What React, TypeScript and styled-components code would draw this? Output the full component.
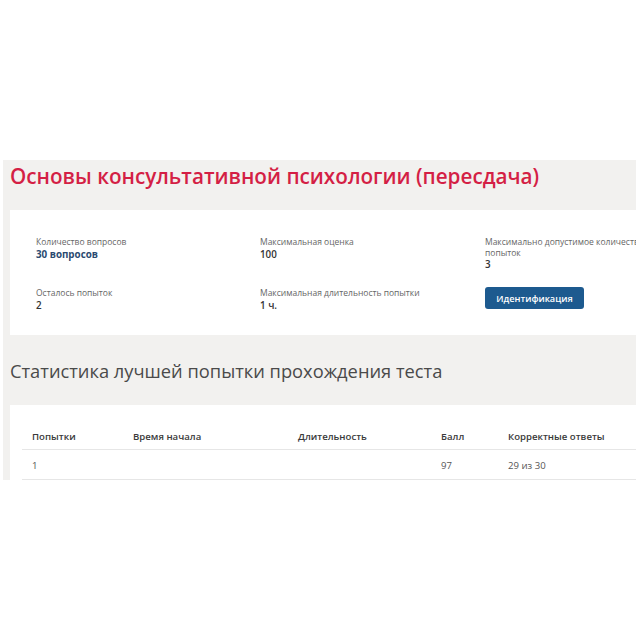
import React from 'react';
import styled, { createGlobalStyle } from 'styled-components';

const RED = '#d41f45';
const FRAME_GREY = '#f2f1ef';
const BLUE_BTN = '#1d5a8f';
const LABEL = '#666';

const GlobalStyle = createGlobalStyle`
  html, body {
    margin: 0;
    padding: 0;
    background: #fff;
    font-family: "Open Sans", "Liberation Sans", sans-serif;
  }
`;

const Frame = styled.div`
  margin: 160px 4px 0 3px;
  height: 320px;
  background: ${FRAME_GREY};
  overflow: hidden;
  padding-left: 7px;
`;

const Title = styled.h1`
  margin: 0;
  height: 50px;
  padding-top: 1px;
  box-sizing: border-box;
  font-size: 20.7px;
  font-weight: 600;
  color: ${RED};
  line-height: 30px;
  white-space: nowrap;
`;

const Card = styled.div`
  background: #fff;
  width: 700px;
  box-sizing: border-box;
`;

const InfoCard = styled(Card)`
  height: 125px;
  padding: 27px 0 0 26px;
  display: grid;
  grid-template-columns: 224px 225px 165px;
  grid-template-rows: 51px auto;
`;

const Field = styled.div`
  display: flex;
  flex-direction: column;
  align-items: flex-start;
`;

const Label = styled.span`
  font-size: 8.5px;
  line-height: 10.5px;
  color: ${LABEL};
`;

const Value = styled.span<{ $accent?: boolean }>`
  font-size: 9.8px;
  line-height: 13px;
  font-weight: ${p => (p.$accent ? 700 : 600)};
  color: ${p => (p.$accent ? '#2b4a70' : '#333')};
`;

const Button = styled.button`
  width: 99px;
  height: 22px;
  margin-top: -1px;
  border: none;
  border-radius: 3px;
  background: ${BLUE_BTN};
  color: #fff;
  font-family: inherit;
  font-size: 9.2px;
  font-weight: 600;
  padding: 0;
  cursor: pointer;
`;

const Subtitle = styled.h2`
  margin: 0;
  height: 70px;
  padding-top: 21px;
  box-sizing: border-box;
  font-size: 18.3px;
  font-weight: 400;
  line-height: 30px;
  color: #4a4a4a;
  white-space: nowrap;
`;

const TableCard = styled(Card)`
  padding: 20px 0 0 12px;
`;

const Table = styled.table`
  width: 614px;
  table-layout: fixed;
  border-collapse: collapse;
  font-size: 9.6px;
  color: #444;
`;

const Head = styled.th<{ $w: number }>`
  width: ${p => p.$w}px;
  box-sizing: border-box;
  text-align: left;
  font-weight: 600;
  color: #3a3a3a;
  padding: 0 0 0 10px;
  height: 24px;
  border-bottom: 1px solid #e6e6e6;
`;

const Cell = styled.td`
  padding: 2px 0 0 10px;
  height: 27px;
  color: #555;
  border-bottom: 1px solid #e6e6e6;
`;

const info = [
  { label: 'Количество вопросов', value: '30 вопросов', accent: true },
  { label: 'Максимальная оценка', value: '100' },
  { label: 'Максимально допустимое количество попыток', value: '3' },
  { label: 'Осталось попыток', value: '2' },
  { label: 'Максимальная длительность попытки', value: '1 ч.' },
];

const columns = [
  { title: 'Попытки', w: 101 },
  { title: 'Время начала', w: 165 },
  { title: 'Длительность', w: 143 },
  { title: 'Балл', w: 67 },
  { title: 'Корректные ответы', w: 138 },
];

const App = (): JSX.Element => (
  <>
    <GlobalStyle />
    <Frame>
      <Title>Основы консультативной психологии (пересдача)</Title>
      <InfoCard>
        {info.map(f => (
          <Field key={f.label}>
            <Label>{f.label}</Label>
            <Value $accent={f.accent}>{f.value}</Value>
          </Field>
        ))}
        <Field>
          <Button>Идентификация</Button>
        </Field>
      </InfoCard>
      <Subtitle>Статистика лучшей попытки прохождения теста</Subtitle>
      <TableCard>
        <Table>
          <thead>
            <tr>
              {columns.map(c => (
                <Head key={c.title} $w={c.w}>{c.title}</Head>
              ))}
            </tr>
          </thead>
          <tbody>
            <tr>
              <Cell>1</Cell>
              <Cell></Cell>
              <Cell></Cell>
              <Cell>97</Cell>
              <Cell>29 из 30</Cell>
            </tr>
          </tbody>
        </Table>
      </TableCard>
    </Frame>
  </>
);

export default App;
